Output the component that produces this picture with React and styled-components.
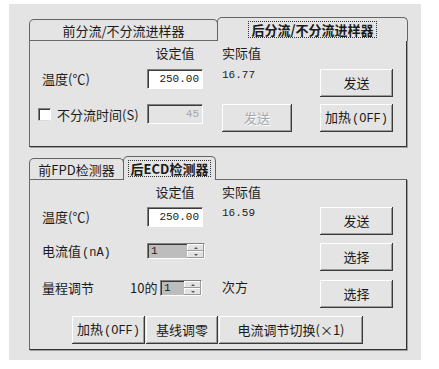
import React from 'react';
import styled, { createGlobalStyle } from 'styled-components';

const GlobalStyle = createGlobalStyle`
  html, body {
    margin: 0;
    padding: 0;
    background: #fff;
  }
  body {
    font-family: "Noto Sans CJK SC", "Liberation Sans", sans-serif;
    font-size: 13px;
    color: #1c1c1c;
  }
`;

const Window = styled.div`
  margin: 4px 0 0 9px;
  width: 412px;
  height: 356px;
  box-sizing: border-box;
  padding: 13px 0 0 20px;
  background: #e4e4e4;
  display: flex;
  flex-direction: column;
  gap: 9px;
`;

const TabStrip = styled.div`
  display: flex;
  align-items: flex-end;
  height: 23px;
`;

const Tab = styled.div`
  width: ${p => p.$w}px;
  height: ${p => (p.$active ? 24 : 21)}px;
  margin-bottom: ${p => (p.$active ? -1 : 0)}px;
  margin-left: ${p => (p.$first ? 0 : -1)}px;
  box-sizing: border-box;
  border: 1px solid #656565;
  border-bottom: none;
  border-radius: 5px 5px 0 0;
  background: #e4e4e4;
  display: flex;
  align-items: center;
  justify-content: center;
  position: relative;
  z-index: ${p => (p.$active ? 2 : 1)};
  font-weight: ${p => (p.$active ? 700 : 400)};
  color: #1a1a1a;
`;

const Focus = styled.span`
  border: 1px dotted #333;
  padding: 0 2px;
  line-height: 15px;
`;

const Body = styled.div`
  width: 378px;
  height: ${p => p.$h}px;
  box-sizing: border-box;
  border: 1px solid #6a6a6a;
  border-right-color: #333;
  border-bottom-color: #333;
  box-shadow: 1px 1px 0 #a0a0a0;
  padding: 5px 13px 0 12px;
  display: flex;
  flex-direction: column;
  position: relative;
  z-index: 1;
`;

const Row = styled.div`
  display: grid;
  grid-template-columns: 105px 75px 98px 73px;
  align-items: start;
  height: ${p => p.$h}px;
  flex: none;
`;

const Label = styled.div`
  line-height: ${p => p.$lh || 20}px;
  white-space: nowrap;
`;

const CheckLabel = styled.label`
  display: flex;
  align-items: center;
  gap: 6px;
  height: 20px;
  white-space: nowrap;
  margin-left: -4px;
`;

const Heading = styled.div`
  width: ${p => p.$w || 'auto'};
  text-align: ${p => p.$align || 'left'};
  line-height: 14px;
  grid-column: ${p => p.$col};
`;

const Value = styled.div`
  font-family: "Liberation Mono", monospace;
  font-size: 11px;
  line-height: 14px;
  margin-top: -1px;
`;

const TextBox = styled.div`
  width: 56px;
  height: 20px;
  box-sizing: border-box;
  border-top: 1px solid #808080;
  border-left: 1px solid #808080;
  border-right: 1px solid #fff;
  border-bottom: 1px solid #fff;
  box-shadow: inset 1px 1px 0 #3a3a3a;
  background: ${p => (p.$disabled ? '#e4e4e4' : '#fff')};
  color: ${p => (p.$disabled ? '#a8a8a8' : '#1a1a1a')};
  font-family: "Liberation Mono", monospace;
  font-size: 11px;
  line-height: 18px;
  text-align: right;
  padding-right: 3px;
`;

const Spin = styled.div`
  width: ${p => p.$w}px;
  height: 16px;
  box-sizing: border-box;
  border-top: 1px solid #808080;
  border-left: 1px solid #808080;
  border-right: 1px solid #fff;
  border-bottom: 1px solid #fff;
  box-shadow: inset 1px 1px 0 #3a3a3a;
  display: flex;
  background: #bdbdbd;
`;

const SpinField = styled.div`
  flex: 1;
  font-family: "Liberation Mono", monospace;
  font-size: 11px;
  line-height: 14px;
  padding-left: 3px;
  color: #1a1a1a;
`;

const SpinArrows = styled.div`
  width: 17px;
  display: flex;
  flex-direction: column;
  background: #e2e2e2;
`;

const SpinHalf = styled.div`
  flex: 1;
  box-shadow: inset -1px -1px 0 #9a9a9a, inset 1px 1px 0 #fff;
  display: flex;
  align-items: center;
  justify-content: center;
  &::after {
    content: '';
    border-left: 2px solid transparent;
    border-right: 2px solid transparent;
    ${p => (p.$up ? 'border-bottom' : 'border-top')}: 2px solid #555;
  }
`;

const Button = styled.button`
  width: ${p => p.$w || 73}px;
  height: 28px;
  box-sizing: border-box;
  border: none;
  padding: 0;
  background: #e4e4e4;
  box-shadow: inset -1px -1px 0 #3a3a3a, inset 1px 1px 0 #fff, inset -2px -2px 0 #9c9c9c;
  font-family: "Noto Sans CJK SC", "Liberation Sans", sans-serif;
  font-size: 13px;
  line-height: 26px;
  text-align: center;
  white-space: nowrap;
  color: ${p => (p.disabled ? '#a8a8a8' : '#1a1a1a')};
  text-shadow: ${p => (p.disabled ? '1px 1px 0 #fff' : 'none')};
  grid-column: ${p => p.$col || 'auto'};
`;

const Mono = styled.span`
  font-family: "Liberation Mono", "Noto Sans CJK SC", monospace;
  font-size: 12px;
  margin-left: 1px;
`;

const Check = styled.span`
  width: 13px;
  height: 13px;
  box-sizing: border-box;
  background: #fff;
  border-top: 1px solid #808080;
  border-left: 1px solid #808080;
  border-right: 1px solid #fff;
  border-bottom: 1px solid #dcdcdc;
  box-shadow: inset 1px 1px 0 #3a3a3a;
  flex: none;
`;

const RangeCell = styled.div`
  grid-column: span 2;
  display: flex;
  align-items: center;
  height: 16px;
  line-height: 16px;
`;

const Fixed = styled.span`
  width: ${p => p.$w}px;
  flex: none;
  white-space: nowrap;
`;

const ButtonBar = styled.div`
  display: flex;
  gap: 1px;
  padding-left: 30px;
`;

const Spinner = ({ w }) => (
  <Spin $w={w}>
    <SpinField>1</SpinField>
    <SpinArrows>
      <SpinHalf $up />
      <SpinHalf />
    </SpinArrows>
  </Spin>
);

const TabPanel = ({ tabs, active, height, children }) => (
  <div>
    <TabStrip>
      {tabs.map((t, i) => (
        <Tab key={t.label} $w={t.w} $active={i === active} $first={i === 0}>
          {i === active ? <Focus>{t.label}</Focus> : t.label}
        </Tab>
      ))}
    </TabStrip>
    <Body $h={height}>{children}</Body>
  </div>
);

const Headings = ({ h }) => (
  <Row $h={h}>
    <Heading $col="2" $w="56px" $align="center">设定值</Heading>
    <Heading $col="3">实际值</Heading>
  </Row>
);

export default function App() {
  return (
    <>
      <GlobalStyle />
      <Window>
        <TabPanel
          tabs={[
            { label: '前分流/不分流进样器', w: 189 },
            { label: '后分流/不分流进样器', w: 191 }
          ]}
          active={1}
          height={107}
        >
          <Headings h={23} />
          <Row $h={35}>
            <Label>温度(℃)</Label>
            <TextBox>250.00</TextBox>
            <Value>16.77</Value>
            <Button>发送</Button>
          </Row>
          <Row $h={28}>
            <CheckLabel>
              <Check />
              不分流时间(S)
            </CheckLabel>
            <TextBox $disabled>45</TextBox>
            <Button $w={70} disabled>发送</Button>
            <Button>
              加热<Mono>(OFF)</Mono>
            </Button>
          </Row>
        </TabPanel>

        <TabPanel
          tabs={[
            { label: '前FPD检测器', w: 95 },
            { label: '后ECD检测器', w: 93 }
          ]}
          active={1}
          height={171}
        >
          <Headings h={22} />
          <Row $h={36}>
            <Label>温度(℃)</Label>
            <TextBox>250.00</TextBox>
            <Value>16.59</Value>
            <Button>发送</Button>
          </Row>
          <Row $h={37}>
            <Label $lh={16}>
              电流值<Mono>(nA)</Mono>
            </Label>
            <Spinner w={58} />
            <div />
            <Button>选择</Button>
          </Row>
          <Row $h={36}>
            <RangeCell>
              <Fixed $w={88}>量程调节</Fixed>
              <Fixed $w={30}>10的</Fixed>
              <Spinner w={42} />
            </RangeCell>
            <Label $lh={14}>次方</Label>
            <Button>选择</Button>
          </Row>
          <ButtonBar>
            <Button>
              加热<Mono>(OFF)</Mono>
            </Button>
            <Button $w={72}>基线调零</Button>
            <Button $w={144}>电流调节切换(×1)</Button>
          </ButtonBar>
        </TabPanel>
      </Window>
    </>
  );
}
